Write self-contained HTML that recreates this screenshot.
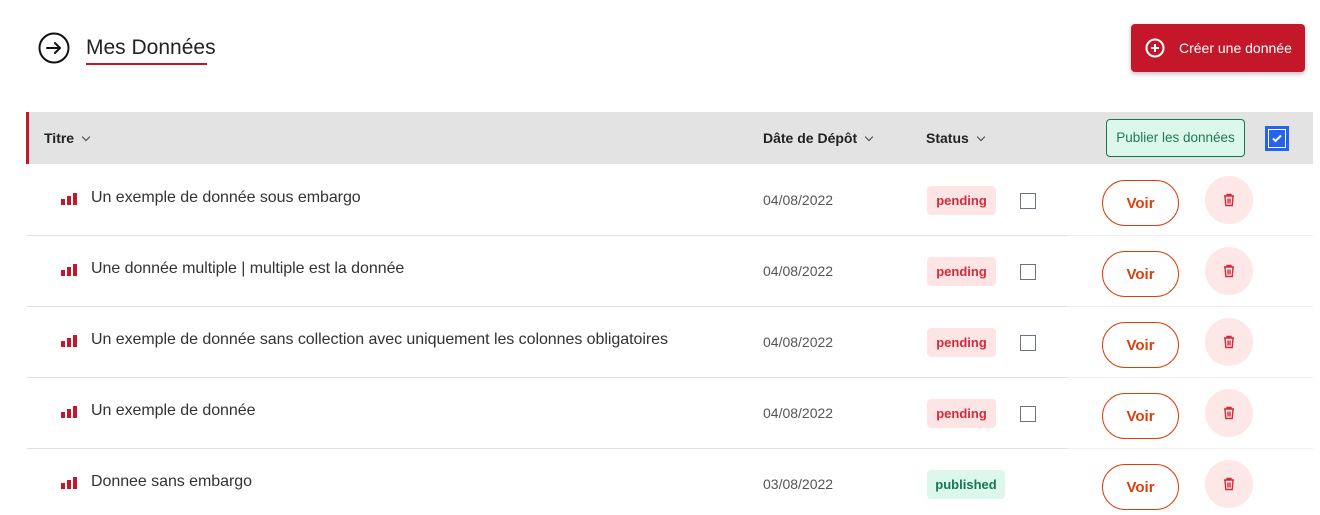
<!DOCTYPE html>
<html><head><meta charset="utf-8"><style>
*{box-sizing:border-box;margin:0;padding:0}
body{width:1320px;height:515px;background:#fff;font-family:"Liberation Sans",sans-serif;position:relative;overflow:hidden;color:#222}
.a{position:absolute}
.hdr{left:26px;top:112px;width:1287px;height:52px;background:#e3e3e3;border-left:3px solid #c5172a}
.th{font-size:14px;font-weight:bold;color:#222;top:130px}
.chev{display:inline-block;width:6px;height:6px;border-right:1.5px solid #444;border-bottom:1.5px solid #444;transform:rotate(45deg);margin-left:9px;position:relative;top:-3px}
.sep{height:1px;background:#e0e0e0;left:27px;width:1040px}
.sep2{height:1px;background:#efefef;left:1067px;width:246px}
.title{left:91px;font-size:16px;color:#333;letter-spacing:-0.05px}
.bars{left:61px;width:16px;height:12px}
.bars i{position:absolute;bottom:0;width:4px;background:#c5172a}
.date{left:763px;font-size:14px;color:#555}
.badge{left:927px;height:29px;border-radius:4px;font-size:13px;font-weight:bold;line-height:29px;text-align:center}
.pend{width:69px;background:#fde5e5;color:#d32b3a}
.pub{width:78px;background:#dcf7ec;color:#137a55}
.cb{left:1020px;width:16px;height:16px;border:1.5px solid #6b7280}
.voir{left:1102px;width:77px;height:46px;border:1.5px solid #d9400f;border-radius:23px;color:#d9400f;font-size:15px;font-weight:bold;text-align:center;line-height:45px}
.tr{left:1205px;width:48px;height:48px;border-radius:50%;background:#fde7e7}
</style></head><body>
<svg class="a" style="left:38px;top:32px" width="32" height="32" viewBox="0 0 32 32"><circle cx="16" cy="16" r="14.5" fill="none" stroke="#111" stroke-width="2"/><path d="M9 16h13M17 11l5 5-5 5" fill="none" stroke="#111" stroke-width="2" stroke-linecap="round" stroke-linejoin="round"/></svg>
<div class="a" style="left:86px;top:36px;font-size:21px;color:#222">Mes Données</div>
<div class="a" style="left:86px;top:63px;width:121px;height:2px;background:#c5172a"></div>
<div class="a" style="left:1131px;top:24px;width:174px;height:48px;background:#c5172a;border-radius:4px;box-shadow:0 2px 5px rgba(0,0,0,.25);color:#fff;font-size:14px;line-height:48px;padding-left:48px">Créer une donnée</div>
<svg class="a" style="left:1145px;top:38px" width="20" height="20" viewBox="0 0 20 20"><circle cx="10" cy="10" r="8.5" fill="none" stroke="#fff" stroke-width="2"/><path d="M10 6v8M6 10h8" stroke="#fff" stroke-width="2"/></svg>
<div class="a hdr"></div>
<div class="a th" style="left:44px">Titre<span class="chev"></span></div>
<div class="a th" style="left:763px">Dâte de Dépôt<span class="chev"></span></div>
<div class="a th" style="left:926px">Status<span class="chev"></span></div>
<div class="a" style="left:1106px;top:119px;width:139px;height:38px;background:#dcf7ec;border:1px solid #167a4f;border-radius:4px;color:#1f7a52;font-size:13.5px;text-align:center;line-height:36px">Publier les données</div>
<div class="a" style="left:1265px;top:126px;width:24px;height:25px;background:#2563eb;padding:3px"><div style="width:18px;height:19px;background:#2563eb;border:1.5px solid #fff"></div></div>
<svg class="a" style="left:1270px;top:131px" width="14" height="14" viewBox="0 0 14 14"><path d="M3 7.5l2.5 2.5L11 4.5" fill="none" stroke="#fff" stroke-width="2"/></svg>

<div class="a bars" style="top:193px"><i style="left:0;height:6px"></i><i style="left:6px;height:9px"></i><i style="left:12px;height:12px"></i></div>
<div class="a title" style="top:189px">Un exemple de donnée sous embargo</div>
<div class="a date" style="top:192px">04/08/2022</div>
<div class="a badge pend" style="top:186px">pending</div>
<div class="a cb" style="top:193px"></div>
<div class="a voir" style="top:180px">Voir</div>
<div class="a tr" style="top:176px"></div>
<div class="a sep" style="top:235px"></div><div class="a sep2" style="top:235px"></div>

<div class="a bars" style="top:264px"><i style="left:0;height:6px"></i><i style="left:6px;height:9px"></i><i style="left:12px;height:12px"></i></div>
<div class="a title" style="top:260px">Une donnée multiple | multiple est la donnée</div>
<div class="a date" style="top:263px">04/08/2022</div>
<div class="a badge pend" style="top:257px">pending</div>
<div class="a cb" style="top:264px"></div>
<div class="a voir" style="top:251px">Voir</div>
<div class="a tr" style="top:247px"></div>
<div class="a sep" style="top:306px"></div><div class="a sep2" style="top:306px"></div>

<div class="a bars" style="top:335px"><i style="left:0;height:6px"></i><i style="left:6px;height:9px"></i><i style="left:12px;height:12px"></i></div>
<div class="a title" style="top:331px">Un exemple de donnée sans collection avec uniquement les colonnes obligatoires</div>
<div class="a date" style="top:334px">04/08/2022</div>
<div class="a badge pend" style="top:328px">pending</div>
<div class="a cb" style="top:335px"></div>
<div class="a voir" style="top:322px">Voir</div>
<div class="a tr" style="top:318px"></div>
<div class="a sep" style="top:377px"></div><div class="a sep2" style="top:377px"></div>

<div class="a bars" style="top:406px"><i style="left:0;height:6px"></i><i style="left:6px;height:9px"></i><i style="left:12px;height:12px"></i></div>
<div class="a title" style="top:402px">Un exemple de donnée</div>
<div class="a date" style="top:405px">04/08/2022</div>
<div class="a badge pend" style="top:399px">pending</div>
<div class="a cb" style="top:406px"></div>
<div class="a voir" style="top:393px">Voir</div>
<div class="a tr" style="top:389px"></div>
<div class="a sep" style="top:448px"></div><div class="a sep2" style="top:448px"></div>

<div class="a bars" style="top:477px"><i style="left:0;height:6px"></i><i style="left:6px;height:9px"></i><i style="left:12px;height:12px"></i></div>
<div class="a title" style="top:473px">Donnee sans embargo</div>
<div class="a date" style="top:476px">03/08/2022</div>
<div class="a badge pub" style="top:470px">published</div>
<div class="a voir" style="top:464px">Voir</div>
<div class="a tr" style="top:460px"></div>

<svg class="a" style="left:1223px;top:193px" width="12" height="14" viewBox="0 0 12 14"><path d="M1 3h10M4 3V1.5h4V3M2 3l.8 9.5h6.4L10 3M5 5.5v5M7 5.5v5" fill="none" stroke="#d32b3a" stroke-width="1.4"/></svg>
<svg class="a" style="left:1223px;top:264px" width="12" height="14" viewBox="0 0 12 14"><path d="M1 3h10M4 3V1.5h4V3M2 3l.8 9.5h6.4L10 3M5 5.5v5M7 5.5v5" fill="none" stroke="#d32b3a" stroke-width="1.4"/></svg>
<svg class="a" style="left:1223px;top:335px" width="12" height="14" viewBox="0 0 12 14"><path d="M1 3h10M4 3V1.5h4V3M2 3l.8 9.5h6.4L10 3M5 5.5v5M7 5.5v5" fill="none" stroke="#d32b3a" stroke-width="1.4"/></svg>
<svg class="a" style="left:1223px;top:406px" width="12" height="14" viewBox="0 0 12 14"><path d="M1 3h10M4 3V1.5h4V3M2 3l.8 9.5h6.4L10 3M5 5.5v5M7 5.5v5" fill="none" stroke="#d32b3a" stroke-width="1.4"/></svg>
<svg class="a" style="left:1223px;top:477px" width="12" height="14" viewBox="0 0 12 14"><path d="M1 3h10M4 3V1.5h4V3M2 3l.8 9.5h6.4L10 3M5 5.5v5M7 5.5v5" fill="none" stroke="#d32b3a" stroke-width="1.4"/></svg>
</body></html>
